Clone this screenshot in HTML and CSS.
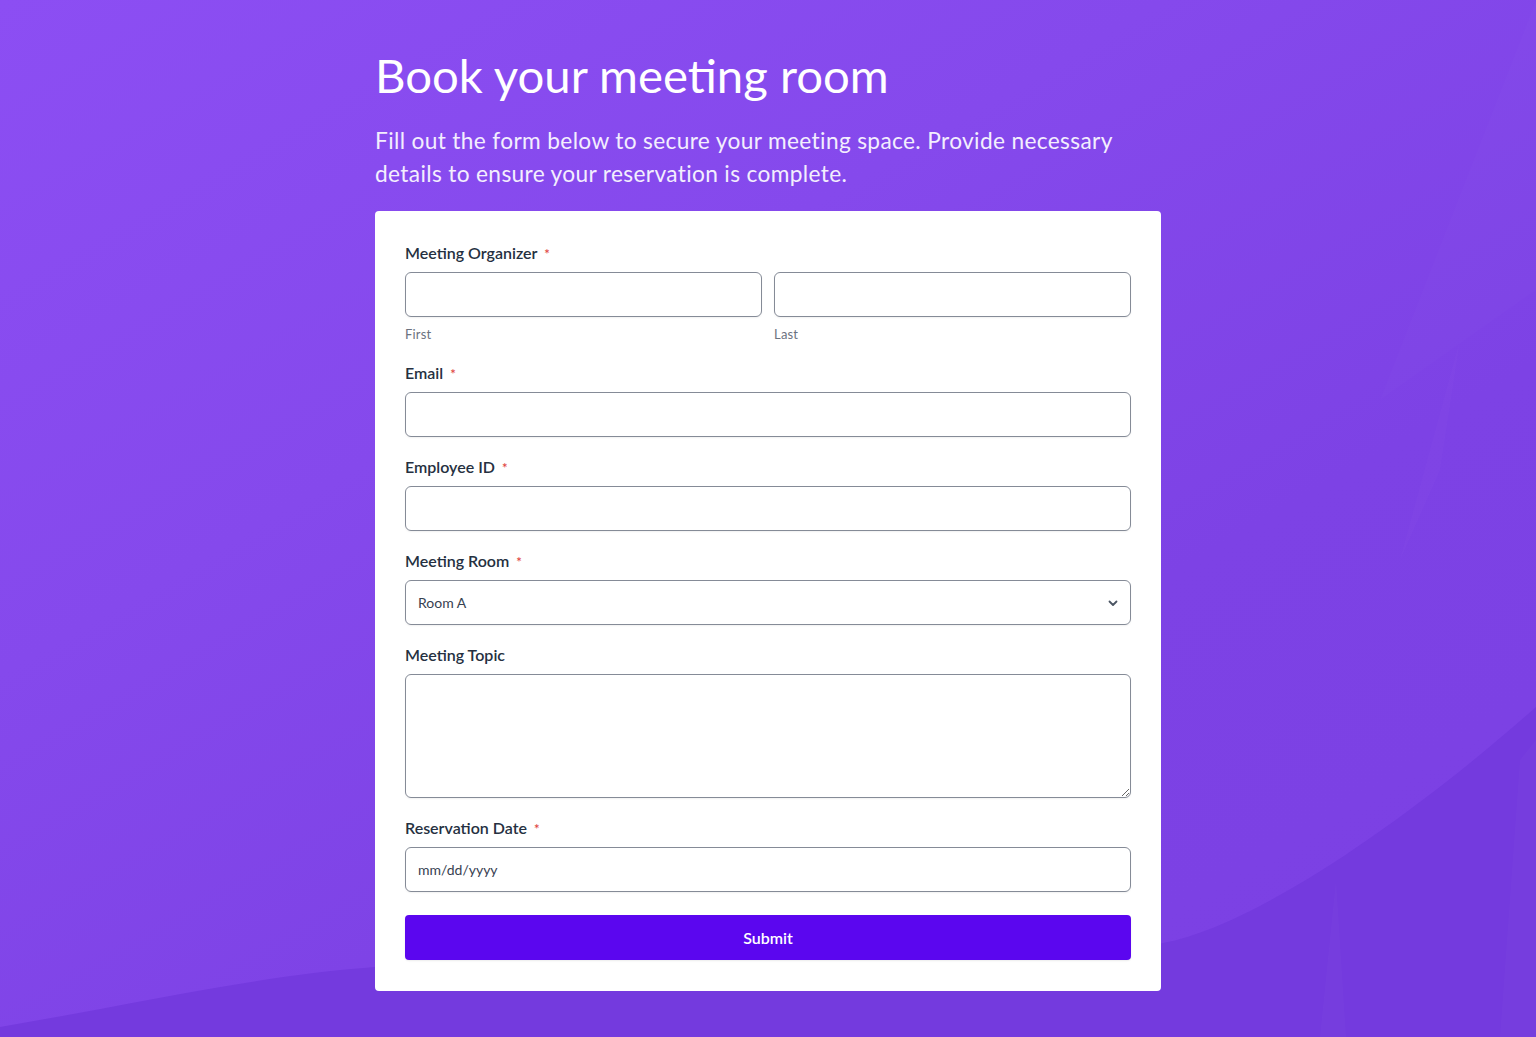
FILE: index.html
```html
<!DOCTYPE html>
<html lang="en">
<head>
<meta charset="utf-8">
<title>Book your meeting room</title>
<link rel="stylesheet" href="styles.css">
</head>
<body>
<svg class="bg" width="1536" height="1037" viewBox="0 0 1536 1037" preserveAspectRatio="none" aria-hidden="true">
  <path d="M1380 400 L1536 290 L1536 0 L1536 0 Z" fill="rgba(255,255,255,0.012)"/>
  <path d="M1400 560 L1460 340 L1440 470 Z" fill="rgba(255,255,255,0.015)"/>
  <path d="M0 1027 C130 1005 260 975 375 967 C800 955 1050 965 1163 943 C1260 925 1420 810 1536 707 L1536 1037 L0 1037 Z" fill="#743ade"/>
  <path d="M1320 1037 L1336 880 L1346 1037 Z" fill="rgba(255,255,255,0.018)"/>
  <path d="M1500 1037 L1520 760 L1536 740 L1536 1037 Z" fill="rgba(255,255,255,0.018)"/>
</svg>
<main class="wrap">
  <h1 class="title">Book your meeting room</h1>
  <p class="intro">Fill out the form below to secure your meeting space. Provide necessary details to ensure your reservation is complete.</p>
  <form class="card">
    <div class="field field-name">
      <label class="label">Meeting Organizer <span class="req">*</span></label>
      <div class="name-row">
        <div class="name-col">
          <input class="input" type="text">
          <span class="sub">First</span>
        </div>
        <div class="name-col">
          <input class="input" type="text">
          <span class="sub">Last</span>
        </div>
      </div>
    </div>
    <div class="field">
      <label class="label">Email <span class="req">*</span></label>
      <input class="input" type="email">
    </div>
    <div class="field">
      <label class="label">Employee ID <span class="req">*</span></label>
      <input class="input" type="text">
    </div>
    <div class="field">
      <label class="label">Meeting Room <span class="req">*</span></label>
      <div class="select">
        <span class="select-value">Room A</span>
        <svg class="chev" width="12" height="12" viewBox="0 0 12 12"><path d="M2.5 4.5 L6 8 L9.5 4.5" fill="none" stroke="#4b5563" stroke-width="1.8" stroke-linecap="round" stroke-linejoin="round"/></svg>
      </div>
    </div>
    <div class="field">
      <label class="label">Meeting Topic</label>
      <textarea class="input area"></textarea>
    </div>
    <div class="field">
      <label class="label">Reservation Date <span class="req">*</span></label>
      <input class="input date" type="text" placeholder="mm/dd/yyyy">
    </div>
    <button class="submit" type="button">Submit</button>
  </form>
</main>
</body>
</html>
```

FILE: styles.css
```css
html, body {
  margin: 0;
  padding: 0;
}
body {
  min-height: 1037px;
  font-family: Lato, "Open Sans", sans-serif;
  background: linear-gradient(150deg, #8c4ef3 0%, #8549ec 35%, #7d42e5 65%, #7b40e3 100%);
  position: relative;
  overflow: hidden;
}
.bg {
  position: absolute;
  left: 0;
  top: 0;
  width: 1536px;
  height: 1037px;
  pointer-events: none;
}
.wrap {
  position: relative;
  width: 786px;
  margin: 0 auto;
  padding-top: 47px;
}
.title {
  margin: 0;
  font-size: 47.3px;
  line-height: 56px;
  font-weight: 400;
  color: #ffffff;
  letter-spacing: 0;
}
.intro {
  margin: 21px 0 0;
  max-width: 750px;
  font-size: 22.7px;
  line-height: 33px;
  letter-spacing: 0.35px;
  color: #f3eefe;
  font-weight: 400;
}
.card {
  margin-top: 21px;
  background: #ffffff;
  border-radius: 4px;
  padding: 32px 30px 31px;
  display: flex;
  flex-direction: column;
}
.field {
  display: flex;
  flex-direction: column;
  margin-bottom: 20px;
}
.field-name {
  margin-bottom: 21px;
}
.label {
  display: flex;
  align-items: center;
  height: 20px;
  font-size: 16px;
  line-height: 20px;
  font-weight: 600;
  color: #253041;
  margin-bottom: 9px;
  white-space: pre;
}
.req {
  color: #e0463f;
  font-size: 13px;
  line-height: 20px;
  margin-left: 3px;
  position: relative;
  top: 1px;
}
.name-row {
  display: grid;
  grid-template-columns: 1fr 1fr;
  gap: 12px;
}
.name-col {
  display: flex;
  flex-direction: column;
}
.sub {
  margin-top: 9px;
  font-size: 13px;
  line-height: 16px;
  letter-spacing: 0.2px;
  color: #6b7280;
}
.input {
  box-sizing: border-box;
  height: 45px;
  width: 100%;
  border: 1px solid #858b97;
  border-radius: 6px;
  background: #ffffff;
  box-shadow: 0 1px 2px rgba(0, 0, 0, 0.06);
  font-family: Lato, sans-serif;
  font-size: 14px;
  color: #374151;
  padding: 0 12px;
  outline: none;
  margin: 0;
}
.area {
  height: 124px;
  resize: vertical;
  padding: 10px 12px;
  display: block;
}
.date::placeholder {
  color: #374151;
  opacity: 1;
}
.select {
  box-sizing: border-box;
  height: 45px;
  border: 1px solid #858b97;
  border-radius: 6px;
  box-shadow: 0 1px 2px rgba(0, 0, 0, 0.06);
  display: flex;
  align-items: center;
  justify-content: space-between;
  padding: 0 11px 0 12px;
}
.select-value {
  font-size: 14px;
  color: #374151;
}
.chev {
  display: block;
}
.submit {
  margin-top: 3px;
  height: 45px;
  border: none;
  border-radius: 4px;
  background: #5b06ef;
  color: #ffffff;
  font-family: Lato, sans-serif;
  font-size: 16px;
  font-weight: 600;
  box-shadow: 0 1px 2px rgba(0, 0, 0, 0.08);
}
```
